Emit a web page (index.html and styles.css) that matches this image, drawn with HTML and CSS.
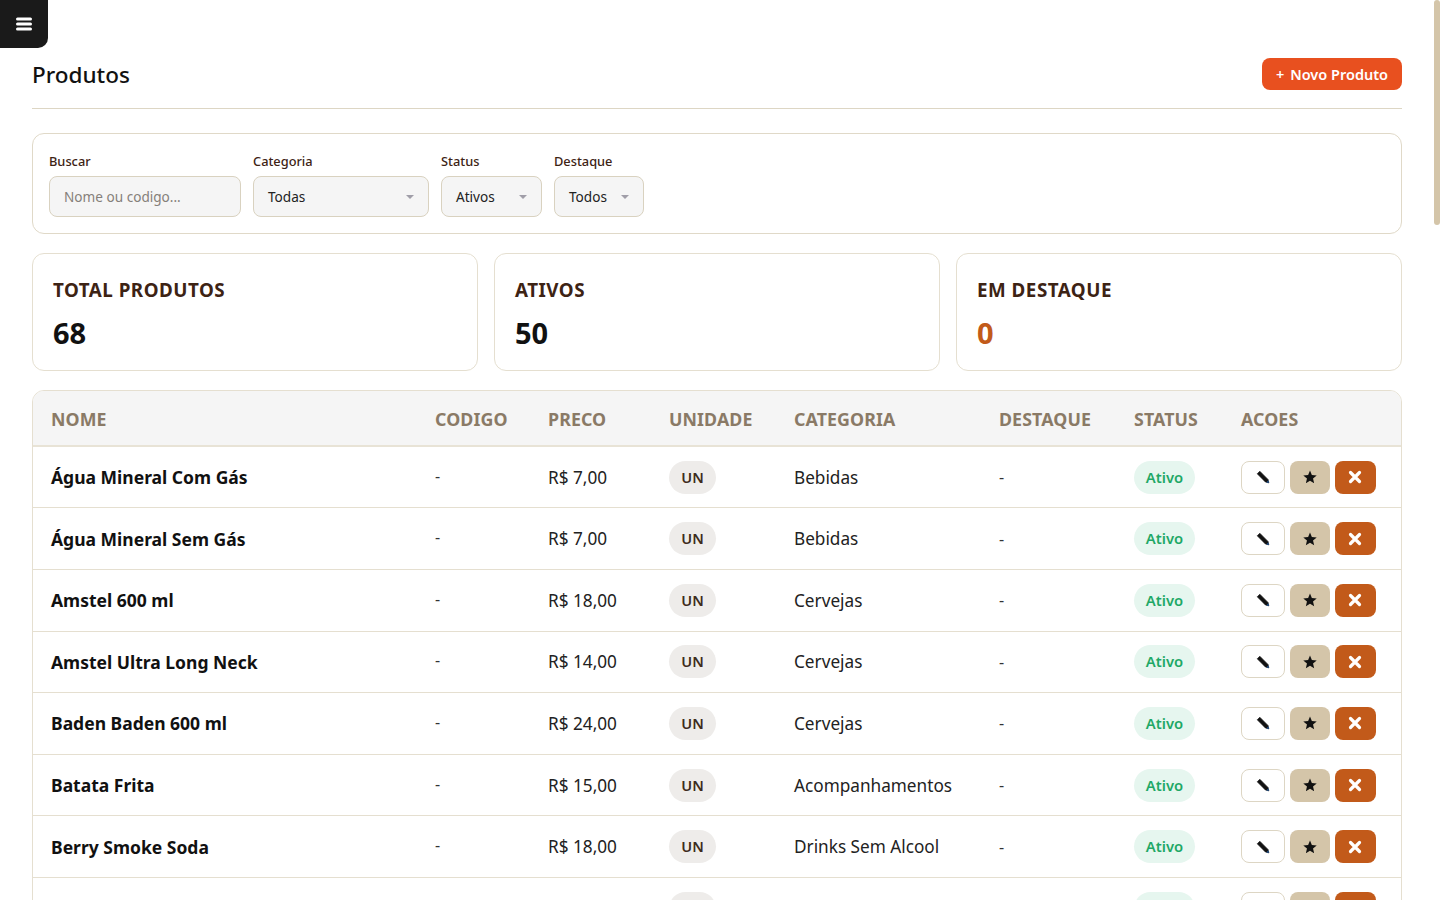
FILE: index.html
```html
<!DOCTYPE html>
<html lang="pt-BR">
<head>
    <meta charset="UTF-8">
    <meta name="viewport" content="width=device-width, initial-scale=1.0">
    <title>Produtos</title>
    <link rel="stylesheet" href="styles.css">
</head>
<body>
    <button class="menu-btn" aria-label="Menu">
        <svg width="16" height="14" viewBox="0 0 16 14"><path d="M1.500 2h13M1.500 7h13M1.500 12h13" stroke="#fff" stroke-width="3" stroke-linecap="round"/></svg>
    </button>
    <div class="scroll-thumb"></div>

    <main class="page">
        <header class="page-header">
            <h1>Produtos</h1>
            <button class="btn-new"><span class="plus">+</span>Novo Produto</button>
        </header>

        <!-- Filtros -->
        <section class="filters">
            <div class="field">
                <label>Buscar</label>
                <input class="control search" type="text" placeholder="Nome ou codigo...">
            </div>
            <div class="field">
                <label>Categoria</label>
                <div class="control select w-cat">Todas<span class="caret"></span></div>
            </div>
            <div class="field">
                <label>Status</label>
                <div class="control select w-status">Ativos<span class="caret"></span></div>
            </div>
            <div class="field">
                <label>Destaque</label>
                <div class="control select w-dest">Todos<span class="caret"></span></div>
            </div>
        </section>

        <!-- Resumo -->
        <section class="stats">
            <div class="stat"><div class="stat-label">Total Produtos</div><div class="stat-value">68</div></div>
            <div class="stat"><div class="stat-label">Ativos</div><div class="stat-value">50</div></div>
            <div class="stat"><div class="stat-label">Em Destaque</div><div class="stat-value accent">0</div></div>
        </section>

        <section class="table-card">
            <table>
                <colgroup>
                    <col class="c-nome"><col class="c-codigo"><col class="c-preco"><col class="c-unidade">
                    <col class="c-categoria"><col class="c-destaque"><col class="c-status"><col class="c-acoes">
                </colgroup>
                <thead>
                    <tr><th>Nome</th><th>Codigo</th><th>Preco</th><th>Unidade</th><th>Categoria</th><th>Destaque</th><th>Status</th><th>Acoes</th></tr>
                </thead>
                <tbody id="rows"></tbody>
            </table>
        </section>
    </main>

    <script>
        const produtos = [
            ["Água Mineral Com Gás", "R$ 7,00", "Bebidas"],
            ["Água Mineral Sem Gás", "R$ 7,00", "Bebidas"],
            ["Amstel 600 ml", "R$ 18,00", "Cervejas"],
            ["Amstel Ultra Long Neck", "R$ 14,00", "Cervejas"],
            ["Baden Baden 600 ml", "R$ 24,00", "Cervejas"],
            ["Batata Frita", "R$ 15,00", "Acompanhamentos"],
            ["Berry Smoke Soda", "R$ 18,00", "Drinks Sem Alcool"],
            ["", "", ""] // linha cortada pela dobra, o texto nao aparece
        ];

        const pencil = '<svg width="14" height="14" viewBox="0 0 14 14"><path d="M3.800 1.200 1.200 3.800 9.400 12 12.900 12.900 12 9.400z" fill="#111" stroke="#111" stroke-width=".6" stroke-linejoin="round"/><path d="M10.300 12.400 12.900 12.900 12.400 10.300z" fill="#1d4f8c"/></svg>';
        const star = '<svg width="14" height="14" viewBox="0 0 24 24"><path d="M12 1l3.200 7.600 8.300.7-6.300 5.400 1.900 8.100L12 18.500 4.900 22.800l1.900-8.100L.5 9.300l8.300-.7z" fill="#111"/></svg>';
        const cross = '<svg width="14" height="14" viewBox="0 0 14 14"><path d="M2.500 2.500l9 9M11.500 2.500l-9 9" stroke="#fff" stroke-width="3.200" stroke-linecap="round"/></svg>';

        // Monta as linhas da tabela
        document.getElementById("rows").innerHTML = produtos.map(p => `
            <tr>
                <td class="name">${p[0]}</td>
                <td class="dash up">${p[0] ? "-" : ""}</td>
                <td>${p[1]}</td>
                <td><span class="unit">${p[0] ? "UN" : ""}</span></td>
                <td>${p[2]}</td>
                <td class="dash">${p[0] ? "-" : ""}</td>
                <td><span class="active">${p[0] ? "Ativo" : ""}</span></td>
                <td><div class="actions">
                    <button class="act edit" aria-label="Editar">${pencil}</button>
                    <button class="act fav" aria-label="Destacar">${star}</button>
                    <button class="act del" aria-label="Excluir">${cross}</button>
                </div></td>
            </tr>`).join("");
    </script>
</body>
</html>
```
FILE: styles.css
```css
* {
    box-sizing: border-box;
}

body {
    margin: 0;
    background: #fff;
    color: #111;
    font-family: "Noto Sans", "Open Sans", sans-serif;
}

.menu-btn {
    position: fixed;
    top: 0;
    left: 0;
    width: 48px;
    height: 48px;
    border: 0;
    padding: 0;
    background: #1a1a1a;
    border-bottom-right-radius: 10px;
    display: flex;
    align-items: center;
    justify-content: center;
}

/* Barra de rolagem da janela */
.scroll-thumb {
    position: fixed;
    top: 0;
    right: 0;
    width: 6px;
    height: 225px;
    background: #d4c5a9;
    border-radius: 3px;
}

.page {
    padding: 48px 38px 32px 32px;
}

.page-header {
    display: flex;
    justify-content: space-between;
    align-items: center;
    height: 61px;
    padding-bottom: 19px;
    padding-top: 10px;
    border-bottom: 1px solid #ddd6c4;
    margin-bottom: 24px;
}

.page-header h1 {
    margin: 2px 0 0;
    font-size: 22.500px;
    font-weight: 500;
    color: #111;
}

.btn-new {
    background: #e8501f;
    color: #fff;
    border: 0;
    border-radius: 8px;
    width: 140px;
    height: 32px;
    padding: 0;
    font: 600 14.500px "Noto Sans", sans-serif;
}

.plus {
    margin-right: 6px;
}

.filters {
    display: flex;
    gap: 12px;
    height: 101px;
    padding: 16px;
    border: 1px solid #e0d9c8;
    border-radius: 12px;
    margin-bottom: 19px;
}

.field label {
    display: block;
    height: 26px;
    padding-top: 2px;
    font-size: 12.800px;
    font-weight: 500;
    color: #3d2314;
}

.control {
    display: block;
    height: 41px;
    padding: 0 14px;
    border: 1px solid #d9d2c0;
    border-radius: 8px;
    background: #f5f5f5;
    font: 13.600px "Noto Sans", sans-serif;
    color: #222;
}

.search {
    width: 192px;
}

.search::placeholder {
    color: #85807a;
}

.select {
    display: flex;
    align-items: center;
    justify-content: space-between;
}

.w-cat { width: 176px; }
.w-status { width: 101px; }
.w-dest { width: 90px; }

.caret {
    width: 0;
    height: 0;
    border-left: 4px solid transparent;
    border-right: 4px solid transparent;
    border-top: 4px solid #a09ea8;
}

.stats {
    display: grid;
    grid-template-columns: repeat(3, 1fr);
    gap: 16px;
    margin-bottom: 19px;
}

.stat {
    height: 118px;
    padding: 22px 20px;
    border: 1px solid #e5dfd0;
    border-radius: 12px;
}

.stat-label {
    font-size: 18.800px;
    font-weight: 700;
    letter-spacing: 0.5px;
    text-transform: uppercase;
    color: #3d2314;
    line-height: 28px;
}

.stat-value {
    margin-top: 9px;
    font-size: 29px;
    font-weight: 700;
    line-height: 40px;
    color: #111;
}

.stat-value.accent {
    color: #c25a1a;
}

.table-card {
    border: 1px solid #e5dfd0;
    border-radius: 12px;
    overflow: hidden;
}

table {
    width: 100%;
    table-layout: fixed;
    border-collapse: collapse;
}

.c-nome { width: 384px; }
.c-codigo { width: 113px; }
.c-preco { width: 121px; }
.c-unidade { width: 125px; }
.c-categoria { width: 205px; }
.c-destaque { width: 135px; }
.c-status { width: 107px; }
.c-acoes { width: 178px; }

th {
    height: 55.300px;
    padding: 2px 18px 0;
    background: #f5f5f5;
    border-bottom: 2px solid #e8e3d6;
    text-align: left;
    font-size: 17.800px;
    font-weight: 700;
    letter-spacing: 0.1px;
    text-transform: uppercase;
    color: #8a7a66;
}

td {
    height: 61.600px;
    padding: 0 18px;
    border-bottom: 1px solid #e5dfd0;
    font-size: 17.200px;
    color: #222;
}

td.name {
    font-weight: 700;
    font-size: 17.500px;
    color: #111;
}

td.dash {
    color: #333;
    font-size: 16px;
}

td.up {
    padding-bottom: 3px;
}

.unit {
    display: inline-block;
    width: 47px;
    height: 33px;
    line-height: 33px;
    border-radius: 17px;
    background: #eeecea;
    text-align: center;
    font-size: 14.600px;
    font-weight: 600;
    color: #3d2c20;
    vertical-align: middle;
}

.active {
    display: inline-block;
    width: 61px;
    height: 33px;
    line-height: 33px;
    border-radius: 17px;
    background: #e6f6ef;
    text-align: center;
    font-size: 14.800px;
    font-weight: 600;
    color: #1fa866;
    vertical-align: middle;
}

.actions {
    display: flex;
    gap: 4.500px;
}

.act {
    display: flex;
    align-items: center;
    justify-content: center;
    width: 41px;
    height: 33px;
    padding: 0;
    border: 0;
    border-radius: 8px;
}

.edit {
    width: 44px;
    background: #fff;
    border: 1px solid #ddd6c4;
}

.fav {
    width: 40.500px;
    background: #d4c5a9;
}

.del {
    background: #c25a1a;
}
```
